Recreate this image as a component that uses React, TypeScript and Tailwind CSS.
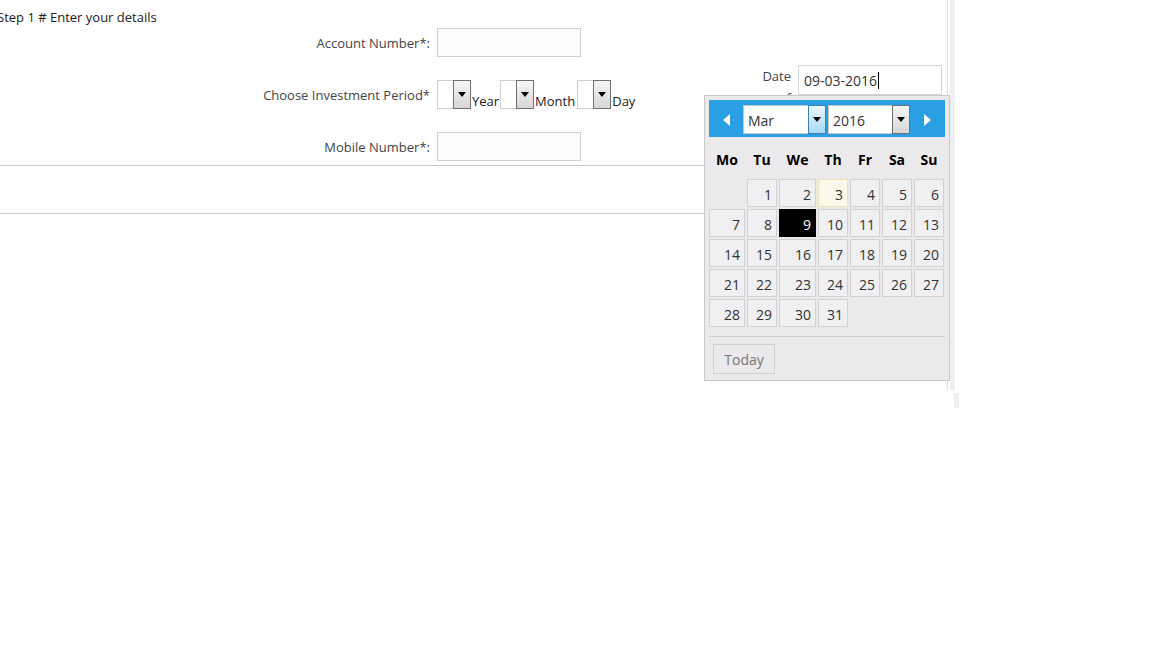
import React from "react";

function DownTri() {
  return (
    <svg width="8" height="5" viewBox="0 0 8 5">
      <path d="M0 0 L8 0 L4 5 Z" fill="#000" />
    </svg>
  );
}

function MiniSelect() {
  return (
    <div className="flex h-[29px] w-[34px] border border-[#cfcfcf] bg-white">
      <div className="flex-1" />
      <div className="-my-px -mr-px flex w-[18px] items-center justify-center border border-[#707070] bg-gradient-to-b from-[#f7f7f7] to-[#d6d6d6]">
        <DownTri />
      </div>
    </div>
  );
}

function HeadSelect({ value, width, active }: { value: string; width: string; active?: boolean }) {
  return (
    <div className={`flex h-[29px] ${width} border border-[#c6c6c6] bg-white`}>
      <div className="flex flex-1 items-center pl-[4px] pt-[1px] text-[14px] text-[#333]">{value}</div>
      <div
        className={
          active
            ? "-my-px -mr-px flex w-[18px] items-center justify-center border border-[#3c7fb1] bg-gradient-to-b from-[#eaf6fd] to-[#a7d9f5]"
            : "-my-px -mr-px flex w-[18px] items-center justify-center border border-[#707070] bg-gradient-to-b from-[#f7f7f7] to-[#d6d6d6]"
        }
      >
        <DownTri />
      </div>
    </div>
  );
}

const days: (number | null)[] = [null, 1, 2, 3, 4, 5, 6];
for (let d = 7; d <= 31; d++) days.push(d);

function Cell({ d }: { d: number | null }) {
  if (d === null) return <div className="h-[28px]" />;
  let cls = "border-[#d2d2d2] bg-[#f0eff1] text-[#333]";
  if (d === 9) cls = "border-black bg-black text-white";
  if (d === 3) cls = "border-[#f1e3b0] bg-[#fdf9ea] text-[#333]";
  return (
    <div className={`flex h-[28px] items-center justify-end border pr-[4px] pt-[2px] text-[14px] ${cls}`}>{d}</div>
  );
}

export default function App() {
  return (
    <div className="relative h-[648px] w-[1152px] overflow-hidden bg-white font-['Open_Sans','Noto_Sans',sans-serif] text-[13px] text-[#333]">
      <div className="flex">
        <div className="h-[390px] w-[948px] border-r border-[#dedede]">
          <div className="-ml-[3px] h-[28px] pt-[7px] leading-[20px] text-[#222]">Step 1 # Enter your details</div>
          <div className="flex">
            <div className="w-[761px]">
              <div className="grid grid-cols-[430px_auto] gap-x-[7px] gap-y-[23px]">
                <div className="flex h-[29px] items-center justify-end pt-[3px] text-[#444]">Account Number*:</div>
                <div className="h-[29px] w-[144px] border border-[#cfcfcf] bg-[#fbfafc]" />
                <div className="flex h-[29px] items-center justify-end pt-[3px] text-[#444]">Choose Investment Period*</div>
                <div className="flex h-[29px] items-end leading-[16px] text-[#222]">
                  <MiniSelect />
                  <span className="mr-[1px] pl-[1px]">Year</span>
                  <MiniSelect />
                  <span className="mr-[2px] pl-[1px]">Month</span>
                  <MiniSelect />
                  <span className="pl-[1px]">Day</span>
                </div>
                <div className="flex h-[29px] items-center justify-end pt-[3px] text-[#444]">Mobile Number*:</div>
                <div className="h-[29px] w-[144px] border border-[#cfcfcf] bg-[#fbfafc]" />
              </div>
            </div>
            <div className="flex pt-[37px]">
              <div className="w-[30px] text-right leading-[22px] text-[#444]">Date of</div>
              <div className="ml-[7px] flex h-[30px] w-[144px] items-center border border-[#d6d6d6] bg-white pl-[5px] pt-[1px] text-[14px] text-[#333]">
                09-03-2016<span className="ml-[1px] inline-block h-[17px] w-px bg-black" />
              </div>
            </div>
          </div>
          <div className="mt-[4px] h-[48px] border-t border-[#cccccc]" />
          <div className="border-t border-[#cccccc]" />
        </div>
        <div className="ml-[2px] flex flex-col">
          <div className="h-[390px] w-[5px] bg-[#efefef]" />
          <div className="ml-[4px] mt-[3px] h-[15px] w-[5px] bg-[#efefef]" />
        </div>
      </div>

      <div className="absolute left-[704px] top-[95px] flex h-[286px] w-[246px] flex-col border border-[#c9c9c9] bg-[#ebe9eb] px-[4px] pt-[4px]">
        <div className="flex h-[37px] items-start bg-[#2a9fe3] pt-[5px]">
          <div className="flex h-[29px] w-[34px] items-center justify-center">
            <svg width="7" height="12" viewBox="0 0 7 12">
              <path d="M7 0 L7 12 L0 6 Z" fill="#fff" />
            </svg>
          </div>
          <HeadSelect value="Mar" width="w-[83px]" active />
          <div className="w-[2px]" />
          <HeadSelect value="2016" width="w-[82px]" />
          <div className="flex h-[29px] w-[34px] items-center justify-center">
            <svg width="7" height="12" viewBox="0 0 7 12">
              <path d="M0 0 L0 12 L7 6 Z" fill="#fff" />
            </svg>
          </div>
        </div>
        <div className="grid grid-cols-[36px_30px_37px_30px_30px_30px_30px] gap-[2px]">
          {["Mo", "Tu", "We", "Th", "Fr", "Sa", "Su"].map((h) => (
            <div key={h} className="flex h-[40px] items-center justify-center pt-[5px] text-[14px] font-bold text-black">
              {h}
            </div>
          ))}
          {days.map((d, i) => (
            <Cell key={i} d={d} />
          ))}
        </div>
        <div className="mt-[9px] border-t border-[#cfcfcf]" />
        <div className="ml-[4px] mt-[7px] flex h-[30px] w-[62px] items-center justify-center border border-[#d0d0d0] pt-[1px] text-[14px] text-[#777]">
          Today
        </div>
      </div>
    </div>
  );
}
